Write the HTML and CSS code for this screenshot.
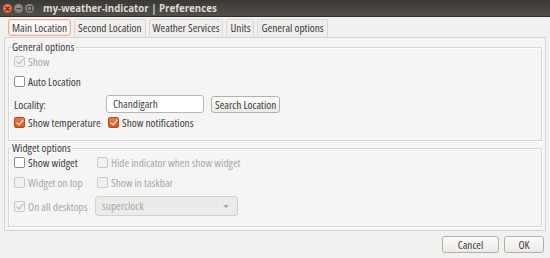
FILE: index.html
```html
<!DOCTYPE html>
<html>
<head>
<meta charset="utf-8">
<link rel="stylesheet" href="styles.css">
</head>
<body>
<div class="window">
  <div class="titlebar">
    <div class="wbtns">
      <span class="wbtn close"><svg width="9" height="9" viewBox="0 0 9 9"><path d="M2.8 2.8 L6.2 6.2 M6.2 2.8 L2.8 6.2" stroke="#4a2212" stroke-width="1.2" stroke-linecap="round"/></svg></span>
      <span class="wbtn"><svg width="9" height="9" viewBox="0 0 9 9"><path d="M2.5 4.5 H6.5" stroke="#3c3b37" stroke-width="1.2"/></svg></span>
      <span class="wbtn"><svg width="9" height="9" viewBox="0 0 9 9"><rect x="2.6" y="2.6" width="3.8" height="3.8" fill="none" stroke="#3c3b37" stroke-width="1"/></svg></span>
    </div>
    <div class="title">my-weather-indicator | Preferences</div>
  </div>

  <div class="tabs">
    <div class="tab active">Main Location</div>
    <div class="tab">Second Location</div>
    <div class="tab">Weather Services</div>
    <div class="tab">Units</div>
    <div class="tab">General options</div>
  </div>

  <div class="panel">
    <fieldset class="frame general">
      <legend>General options</legend>
      <div class="row r-show">
        <label class="check disabled"><span class="box checked"></span>Show</label>
      </div>
      <div class="row r-auto">
        <label class="check"><span class="box"></span>Auto Location</label>
      </div>
      <div class="row r-loc">
        <span class="lbl">Locality:</span>
        <span class="entry">Chandigarh</span>
        <span class="btn search">Search Location</span>
      </div>
      <div class="row r-temp">
        <label class="check c1"><span class="box checked on"></span>Show temperature</label>
        <label class="check"><span class="box checked on"></span>Show notifications</label>
      </div>
    </fieldset>

    <fieldset class="frame widget">
      <legend>Widget options</legend>
      <div class="row w1">
        <label class="check c2"><span class="box"></span>Show widget</label>
        <label class="check disabled"><span class="box"></span>Hide indicator when show widget</label>
      </div>
      <div class="row w2">
        <label class="check c2 disabled"><span class="box"></span>Widget on top</label>
        <label class="check disabled"><span class="box"></span>Show in taskbar</label>
      </div>
      <div class="row w3">
        <label class="check c2 disabled"><span class="box checked"></span>On all desktops</label>
        <span class="combo">superclock<span class="arrow"></span></span>
      </div>
    </fieldset>
  </div>

  <div class="footer">
    <span class="btn dlg">Cancel</span>
    <span class="btn dlg ok">OK</span>
  </div>
</div>
</body>
</html>
```

FILE: styles.css
```css
* { box-sizing: border-box; }
html, body { margin: 0; padding: 0; }
body {
  width: 550px;
  height: 258px;
  overflow: hidden;
  background: #f2f1f0;
  font-family: "Open Sans", "Liberation Sans", sans-serif;
  font-stretch: 84%;
  font-size: 11.3px;
  color: #3c3c3c;
  white-space: nowrap;
}
.window { width: 550px; height: 258px; }

.titlebar {
  height: 17px;
  background: linear-gradient(#3a3935, #524f49);
  display: flex;
  align-items: center;
  border-bottom: 1px solid #2e2d29;
}
.wbtns { display: flex; gap: 2px; padding-left: 3px; }
.wbtn {
  width: 9px; height: 9px; border-radius: 50%;
  background: radial-gradient(circle at 50% 35%, #9a988f, #6f6d66);
  display: block;
}
.wbtn svg { display: block; }
.wbtn.close { background: radial-gradient(circle at 50% 35%, #f58a5c, #e0541f); }
.title {
  margin-left: 9px;
  color: #dfdbd2;
  font-weight: bold;
  font-stretch: 100%;
  font-size: 9.7px;
}

.tabs {
  display: flex;
  margin-top: 2px;
  padding-left: 8px;
  height: 18px;
  align-items: flex-end;
  gap: 3px;
}
.tab {
  height: 18px;
  line-height: 16px;
  padding: 0 3px;
  border: 1px solid #dad8d4;
  border-bottom: none;
  border-radius: 2px 2px 0 0;
  background: #efeeec;
  color: #3c3c3c;
}
.tab.active {
  height: 17px;
  margin-bottom: 1px;
  background: #faf9f8;
  border: 1px solid #f2a98b;
  border-radius: 3px;
  box-shadow: inset 0 0 0 1px #fbe6dc;
}

.panel {
  margin: 0 4px;
  height: 194px;
  border: 1px solid #d5d3cf;
  background: #f5f5f5;
  padding: 3px 3px 0 3px;
}

.frame {
  margin: 0;
  border: 1px solid #d9d7d3;
  box-shadow: inset 1px 1px 0 #ffffff, 1px 1px 0 #ffffff;
  padding: 0 0 0 5px;
}
.frame legend {
  padding: 0 1px;
  margin-left: -3px;
  color: #3c3c3c;
  line-height: 12px;
}
.frame.general { height: 100px; }
.frame.widget { height: 85px; margin-top: 1px; }

.row { display: flex; align-items: center; }
.r-show { height: 16px; }
.r-auto { height: 24px; }
.r-loc { height: 20px; margin-top: 1px; }
.r-temp { height: 17px; }
.w1 { height: 17px; }
.w2 { height: 23px; }
.w3 { height: 24px; }

.check { display: flex; align-items: center; gap: 3px; color: #3c3c3c; }
.check.disabled { color: #aaa7a1; }
.c1 { width: 94px; }
.c2 { width: 83px; }
.box {
  width: 11px; height: 11px;
  border: 1px solid #8f8d88;
  border-radius: 2px;
  background: #ffffff;
  position: relative;
  flex: none;
}
.disabled .box { border-color: #cbc9c5; background: #f2f1ef; }
.box.checked::after {
  content: "";
  position: absolute;
  left: 3px; top: 0px;
  width: 3px; height: 6px;
  border: solid #b5b3ae;
  border-width: 0 1.5px 1.5px 0;
  transform: rotate(40deg);
}
.box.on {
  background: linear-gradient(#ea7a45, #d85a23);
  border-color: #b64a1b;
}
.box.on::after { border-color: #ffffff; }

.lbl { width: 92px; }
.entry {
  width: 98px; height: 18px;
  border: 1px solid #b9b6b1;
  border-radius: 3px;
  background: #ffffff;
  padding-left: 6px;
  line-height: 16px;
  color: #3c3c3c;
}
.btn {
  display: inline-block;
  height: 17px;
  line-height: 15px;
  border: 1px solid #b4b1ac;
  border-radius: 3px;
  background: linear-gradient(#fbfbfa, #eceae7);
  color: #3c3c3c;
  text-align: center;
}
.search { margin-left: 7px; padding: 0 3px; }

.combo {
  margin-left: -2px;
  width: 143px; height: 20px;
  border: 1px solid #d3d1cd;
  border-radius: 3px;
  background: #ecebe9;
  color: #aaa7a1;
  padding-left: 6px;
  line-height: 18px;
  position: relative;
}
.arrow {
  position: absolute;
  right: 8px; top: 8px;
  width: 0; height: 0;
  border-left: 3px solid transparent;
  border-right: 3px solid transparent;
  border-top: 3px solid #aaa7a1;
}

.footer {
  display: flex;
  justify-content: flex-end;
  gap: 5px;
  padding: 5px 6px 0 0;
}
.dlg { width: 57px; height: 17px; }
.dlg.ok { width: 40px; }
```
